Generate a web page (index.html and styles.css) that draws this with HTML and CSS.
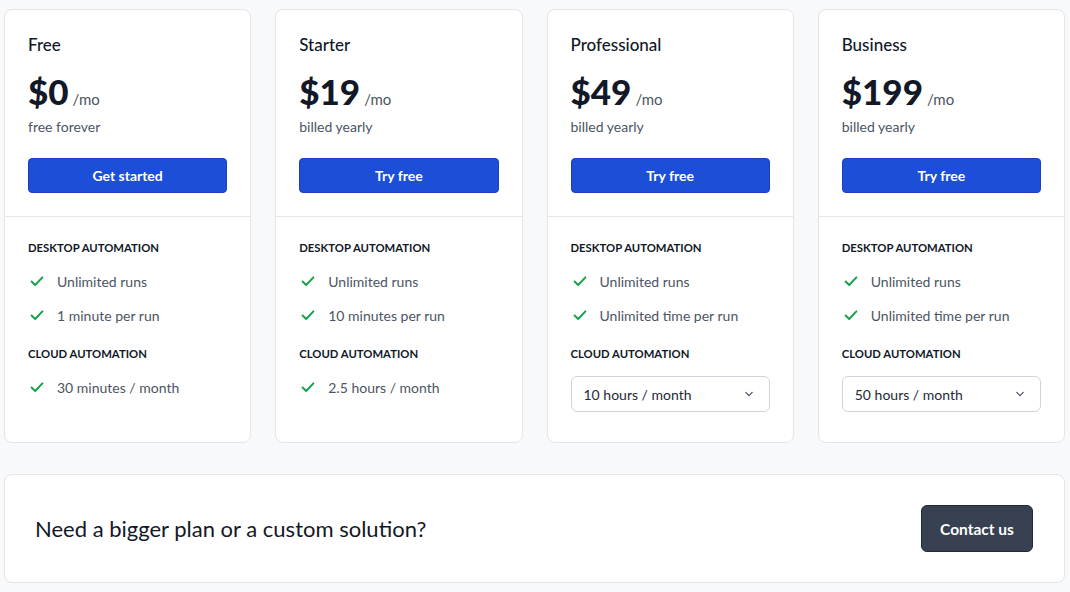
FILE: index.html
```html
<!DOCTYPE html>
<html lang="en">
<head>
<meta charset="utf-8">
<title>Pricing</title>
<link rel="stylesheet" href="styles.css">
</head>
<body>
<main class="page">
  <section class="plans">
    <article class="card">
      <div class="card-top">
        <h2 class="plan-name">Free</h2>
        <div class="price"><span class="amount">$0</span><span class="per">/mo</span></div>
        <p class="billing">free forever</p>
        <button class="btn-primary">Get started</button>
      </div>
      <div class="card-body">
        <h3 class="section-title">DESKTOP AUTOMATION</h3>
        <ul class="features">
          <li><svg class="check" viewBox="0 0 20 20"><path d="M4 10.5l4 4 8-8.5"/></svg>Unlimited runs</li>
          <li><svg class="check" viewBox="0 0 20 20"><path d="M4 10.5l4 4 8-8.5"/></svg>1 minute per run</li>
        </ul>
        <h3 class="section-title">CLOUD AUTOMATION</h3>
        <ul class="features">
          <li><svg class="check" viewBox="0 0 20 20"><path d="M4 10.5l4 4 8-8.5"/></svg>30 minutes / month</li>
        </ul>
      </div>
    </article>
    <article class="card">
      <div class="card-top">
        <h2 class="plan-name">Starter</h2>
        <div class="price"><span class="amount">$19</span><span class="per">/mo</span></div>
        <p class="billing">billed yearly</p>
        <button class="btn-primary">Try free</button>
      </div>
      <div class="card-body">
        <h3 class="section-title">DESKTOP AUTOMATION</h3>
        <ul class="features">
          <li><svg class="check" viewBox="0 0 20 20"><path d="M4 10.5l4 4 8-8.5"/></svg>Unlimited runs</li>
          <li><svg class="check" viewBox="0 0 20 20"><path d="M4 10.5l4 4 8-8.5"/></svg>10 minutes per run</li>
        </ul>
        <h3 class="section-title">CLOUD AUTOMATION</h3>
        <ul class="features">
          <li><svg class="check" viewBox="0 0 20 20"><path d="M4 10.5l4 4 8-8.5"/></svg>2.5 hours / month</li>
        </ul>
      </div>
    </article>
    <article class="card">
      <div class="card-top">
        <h2 class="plan-name">Professional</h2>
        <div class="price"><span class="amount">$49</span><span class="per">/mo</span></div>
        <p class="billing">billed yearly</p>
        <button class="btn-primary">Try free</button>
      </div>
      <div class="card-body">
        <h3 class="section-title">DESKTOP AUTOMATION</h3>
        <ul class="features">
          <li><svg class="check" viewBox="0 0 20 20"><path d="M4 10.5l4 4 8-8.5"/></svg>Unlimited runs</li>
          <li><svg class="check" viewBox="0 0 20 20"><path d="M4 10.5l4 4 8-8.5"/></svg>Unlimited time per run</li>
        </ul>
        <h3 class="section-title">CLOUD AUTOMATION</h3>
        <div class="select"><span>10 hours / month</span><svg class="chev" viewBox="0 0 20 20"><path d="M6 8l4 4 4-4"/></svg></div>
      </div>
    </article>
    <article class="card">
      <div class="card-top">
        <h2 class="plan-name">Business</h2>
        <div class="price"><span class="amount">$199</span><span class="per">/mo</span></div>
        <p class="billing">billed yearly</p>
        <button class="btn-primary">Try free</button>
      </div>
      <div class="card-body">
        <h3 class="section-title">DESKTOP AUTOMATION</h3>
        <ul class="features">
          <li><svg class="check" viewBox="0 0 20 20"><path d="M4 10.5l4 4 8-8.5"/></svg>Unlimited runs</li>
          <li><svg class="check" viewBox="0 0 20 20"><path d="M4 10.5l4 4 8-8.5"/></svg>Unlimited time per run</li>
        </ul>
        <h3 class="section-title">CLOUD AUTOMATION</h3>
        <div class="select"><span>50 hours / month</span><svg class="chev" viewBox="0 0 20 20"><path d="M6 8l4 4 4-4"/></svg></div>
      </div>
    </article>
  </section>
  <section class="custom">
    <p class="custom-text">Need a bigger plan or a custom solution?</p>
    <button class="btn-dark">Contact us</button>
  </section>
</main>
</body>
</html>
```

FILE: styles.css
```css
* { box-sizing: border-box; }
html, body { margin: 0; padding: 0; }
body {
  background: #f8f9fb;
  font-family: Lato, "Noto Sans", sans-serif;
  color: #111827;
}
.page {
  padding: 9px 5px 10px 4px;
  display: flex;
  flex-direction: column;
  gap: 31px;
}
.plans {
  display: grid;
  grid-template-columns: repeat(4, 1fr);
  gap: 24px;
}
.card {
  background: #fff;
  border: 1px solid #e3e5e8;
  border-radius: 8px;
  height: 434px;
}
.card-top {
  padding: 24px 23px 23px;
  border-bottom: 1px solid #e5e7eb;
}
.plan-name {
  margin: 0;
  font-size: 17px;
  font-weight: 500;
  line-height: 22px;
}
.price {
  margin-top: 13px;
  display: flex;
  align-items: baseline;
  height: 45px;
}
.amount {
  font-size: 35px;
  font-weight: 900;
  line-height: 45px;
}
.per {
  margin-left: 4px;
  font-size: 15px;
  color: #4b5563;
}
.billing {
  margin: 3px 0 0;
  font-size: 14px;
  color: #4b5563;
  line-height: 20px;
}
.btn-primary {
  margin-top: 21px;
  width: 100%;
  height: 35px;
  background: #1d4ed8;
  border: 1px solid #1e3fb8;
  border-radius: 4px;
  color: #fff;
  font-family: inherit;
  font-size: 14px;
  font-weight: 700;
}
.card-body {
  padding: 23px 23px;
}
.section-title {
  margin: 0;
  font-size: 11.3px;
  font-weight: 700;
  line-height: 16px;
}
.features {
  list-style: none;
  margin: 8px 0 14px;
  padding: 0;
}
.features li {
  display: flex;
  align-items: center;
  height: 34px;
  font-size: 14px;
  color: #4b5563;
}
.check {
  width: 18px;
  height: 18px;
  margin-right: 11px;
  fill: none;
  stroke: #16a34a;
  stroke-width: 2.2;
  stroke-linecap: round;
  stroke-linejoin: round;
}
.select {
  margin-top: 14px;
  height: 36px;
  border: 1px solid #d1d5db;
  border-radius: 6px;
  display: flex;
  align-items: center;
  justify-content: space-between;
  padding: 0 12px;
  font-size: 14px;
  color: #1f2937;
}
.chev {
  width: 16px;
  height: 16px;
  fill: none;
  stroke: #4b5563;
  stroke-width: 1.6;
  stroke-linecap: round;
  stroke-linejoin: round;
}
.custom {
  background: #fff;
  border: 1px solid #e3e5e8;
  border-radius: 8px;
  height: 109px;
  display: flex;
  align-items: center;
  justify-content: space-between;
  padding: 0 31px 0 30px;
}
.custom-text {
  margin: 0;
  font-size: 22px;
  color: #111827;
}
.btn-dark {
  height: 47px;
  width: 112px;
  padding: 0;
  background: #374151;
  border: 1px solid #1f2937;
  border-radius: 6px;
  color: #fff;
  font-family: inherit;
  font-size: 15.5px;
  font-weight: 700;
}
```
